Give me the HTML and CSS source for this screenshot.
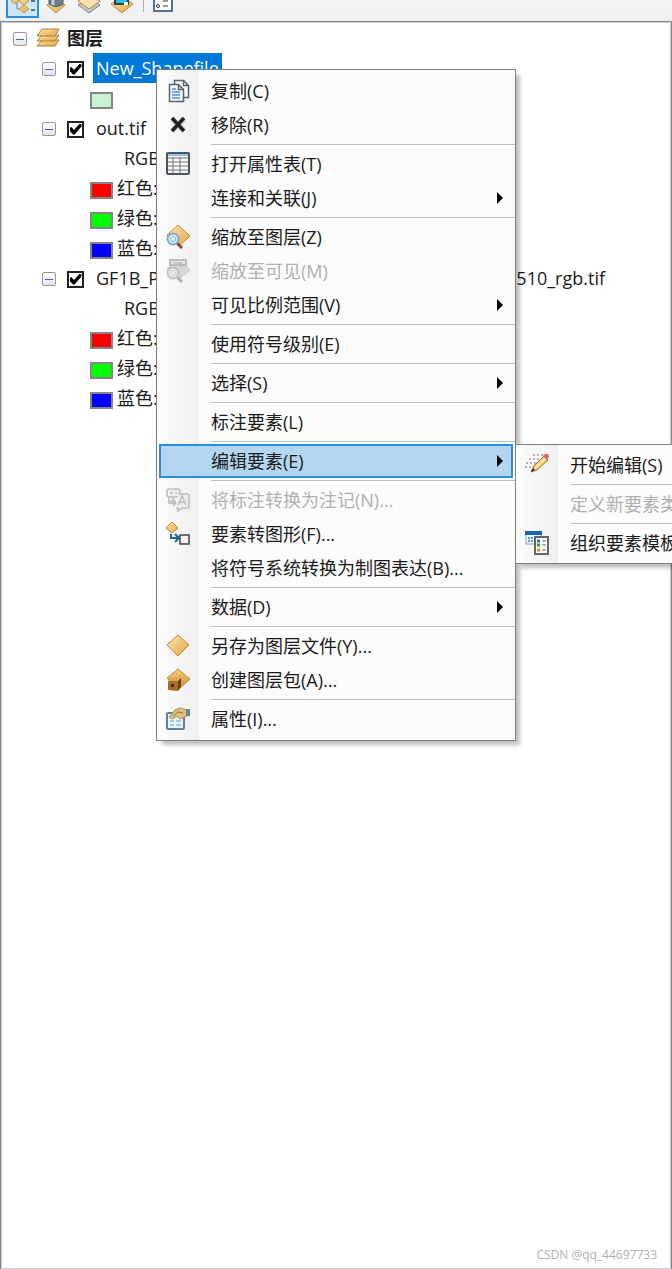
FILE: index.html
```
<!DOCTYPE html>
<html lang="zh-CN">
<head>
    <meta charset="UTF-8">
    <meta name="viewport" content="width=device-width, initial-scale=1.0">
    <title>图层</title>
    <link rel="stylesheet" href="styles.css">
</head>
<body>
    <!-- shared shapes -->
    <svg class="defs" width="0" height="0" aria-hidden="true">
        <defs>
            <linearGradient id="gold" x1="0" y1="0" x2="1" y2="1">
                <stop offset="0" stop-color="#fde7ae"/>
                <stop offset="1" stop-color="#e2a544"/>
            </linearGradient>
            <linearGradient id="amber" x1="0" y1="0" x2="0" y2="1">
                <stop offset="0" stop-color="#f9cf72"/>
                <stop offset="1" stop-color="#c98a2b"/>
            </linearGradient>
        </defs>
    </svg>

    <div class="toolbar">
        <button class="tool active" aria-label="按绘制顺序列出">
            <svg width="30" height="18" viewBox="0 0 30 18">
                <path d="M9 0v9h4M9 1h4" stroke="#7c8790" fill="none"/>
                <path d="M16-3l5 4-5 4-5-4zM16 5l5 4-5 4-5-4z" fill="url(#gold)" stroke="#c59a5a"/>
                <path d="M7-2l4 3-4 3-4-3z" fill="url(#gold)" stroke="#c59a5a"/>
                <path d="M23 1h4M23 10h4" stroke="#44789f" stroke-width="2"/>
            </svg>
        </button>
        <button class="tool" aria-label="按源列出">
            <svg width="24" height="18" viewBox="0 0 24 18">
                <path d="M3 5l9-5 9 5-9 8z" fill="url(#gold)" stroke="#b98a43"/>
                <path d="M5-2v6q7 5 14 0v-6z" fill="#6f7f92" stroke="#505c69"/>
                <path d="M9-2v7" stroke="#c5d3e1" stroke-width="3"/>
            </svg>
        </button>
        <button class="tool" aria-label="按可见性列出">
            <svg width="24" height="18" viewBox="0 0 24 18">
                <path d="M1 5l11-8 11 8-11 8z" fill="#c4c4c4" stroke="#858585"/>
                <path d="M1 1l11-8 11 8-11 8z" fill="#fbe3ad" stroke="#b98a43"/>
            </svg>
        </button>
        <button class="tool" aria-label="按选择列出">
            <svg width="24" height="18" viewBox="0 0 24 18">
                <path d="M1 4l11-8 11 8-11 9z" fill="url(#gold)" stroke="#b98a43"/>
                <path d="M5-2h13v6H5z" fill="#20c4e8" stroke="#3d3d3d" stroke-width="2"/>
                <path d="M14 2h4v3h-4z" fill="#fff"/>
            </svg>
        </button>
        <span class="divider"></span>
        <button class="tool" aria-label="选项">
            <svg width="20" height="18" viewBox="0 0 20 18">
                <path d="M1-4h18v15H1z" fill="#fff" stroke="#56718c" stroke-width="2"/>
                <circle cx="5" cy="6" r="1.500" fill="none" stroke="#333"/>
                <path d="M10 1h5M10 6h5" stroke="#333"/>
            </svg>
        </button>
    </div>

    <main class="contents">
        <div class="row root">
            <button class="expander" aria-label="折叠"></button>
            <svg class="layers" width="24" height="20" viewBox="0 0 24 20">
                <g fill="url(#gold)" stroke="#b47b34">
                    <path d="M6 12h17l-4 6H1z"/>
                    <path d="M6 7h17l-4 6H1z"/>
                    <path d="M6 1h17l-4 7H1z"/>
                </g>
            </svg>
            <strong>图层</strong>
        </div>

        <div class="row layer">
            <button class="expander" aria-label="折叠"></button>
            <input type="checkbox" id="layer-shape" checked>
            <label class="name selected" for="layer-shape">New_Shapefile</label>
        </div>
        <div class="row band"><span class="swatch mint"></span></div>

        <div class="row layer">
            <button class="expander" aria-label="折叠"></button>
            <input type="checkbox" id="layer-out" checked>
            <label class="name" for="layer-out">out.tif</label>
        </div>
        <div class="row composite">RGB</div>
        <div class="row band"><span class="swatch red"></span>红色:</div>
        <div class="row band"><span class="swatch green"></span>绿色:</div>
        <div class="row band"><span class="swatch blue"></span>蓝色:</div>

        <div class="row layer">
            <button class="expander" aria-label="折叠"></button>
            <input type="checkbox" id="layer-gf" checked>
            <label class="name long" for="layer-gf"><span>GF1B_P</span><span>510_rgb.tif</span></label>
        </div>
        <div class="row composite">RGB</div>
        <div class="row band"><span class="swatch red"></span>红色:</div>
        <div class="row band"><span class="swatch green"></span>绿色:</div>
        <div class="row band"><span class="swatch blue"></span>蓝色:</div>
    </main>

    <div class="menu context-menu" role="menu">
        <button class="item" role="menuitem">
            <svg class="icon" viewBox="0 0 24 24">
                <g fill="#f6f9fc" stroke="#59636d" stroke-width="1.500">
                    <path d="M8.500 1.500h9l5 5v12h-14z"/>
                    <path d="M17.500 1.500v5h5" fill="none"/>
                    <path d="M3.500 5.500h9l5 5v12h-14z"/>
                    <path d="M12.500 5.500v5h5" fill="none"/>
                </g>
                <path d="M6 10h4M6 13h8M6 16h8M6 19h8" stroke="#4a90cf" stroke-width="1.500"/>
            </svg>
            <span>复制(C)</span>
        </button>
        <button class="item" role="menuitem">
            <svg class="icon" viewBox="0 0 24 24">
                <path d="M6 6l12 12M18 6L6 18" stroke="#d8d8d8" stroke-width="6"/>
                <path d="M6 5l12 13M18 5L6 18" stroke="#202020" stroke-width="3.500"/>
            </svg>
            <span>移除(R)</span>
        </button>
        <hr>
        <button class="item" role="menuitem">
            <svg class="icon" viewBox="0 0 24 24">
                <rect x="1" y="1" width="22" height="21" rx="1" fill="#f7f7f7" stroke="#4c555d" stroke-width="2"/>
                <path d="M2 3h20" stroke="#8cc6ec" stroke-width="2"/>
                <path d="M2 6h20M2 10h20M2 14h20M2 18h20M7 5v16M14 5v16" stroke="#727272" fill="none"/>
            </svg>
            <span>打开属性表(T)</span>
        </button>
        <button class="item has-sub" role="menuitem"><span>连接和关联(J)</span></button>
        <hr>
        <button class="item" role="menuitem">
            <svg class="icon" viewBox="0 0 24 24">
                <path d="M1 10L12 0l12 11-11 10z" fill="url(#gold)" stroke="#c08a3d"/>
                <path d="M10 17l6 6" stroke="#8c4b2f" stroke-width="3"/>
                <circle cx="7" cy="14" r="5.500" fill="#d9efff" stroke="#86a9c9" stroke-width="2"/>
                <circle cx="7" cy="14" r="2.500" fill="#fff" stroke="#6bb2ed"/>
            </svg>
            <span>缩放至图层(Z)</span>
        </button>
        <button class="item" role="menuitem" disabled>
            <svg class="icon" viewBox="0 0 24 24">
                <path d="M1 10l5-4h13l5 5-11 9z" fill="#d6d6d6" stroke="#c4c4c4"/>
                <path d="M4 1h16v5H4z" fill="#e7e7e7" stroke="#bcbcbc" stroke-width="2"/>
                <path d="M7 4h10" stroke="#aaa"/>
                <path d="M10 17l6 6" stroke="#b0b0b0" stroke-width="3"/>
                <circle cx="7" cy="14" r="5.500" fill="#e9e9e9" stroke="#c2c2c2" stroke-width="2"/>
                <circle cx="7" cy="14" r="2.500" fill="#eee" stroke="#ccc"/>
            </svg>
            <span>缩放至可见(M)</span>
        </button>
        <button class="item has-sub" role="menuitem"><span>可见比例范围(V)</span></button>
        <hr>
        <button class="item" role="menuitem"><span>使用符号级别(E)</span></button>
        <hr>
        <button class="item has-sub" role="menuitem"><span>选择(S)</span></button>
        <hr>
        <button class="item" role="menuitem"><span>标注要素(L)</span></button>
        <hr>
        <button class="item has-sub open" role="menuitem"><span>编辑要素(E)</span></button>
        <hr>
        <button class="item" role="menuitem" disabled>
            <svg class="icon" viewBox="0 0 24 24" fill="none" stroke="#bcbcbc" stroke-width="1.500">
                <rect x="1" y="1" width="13" height="8" rx="2" fill="#eee"/>
                <path d="M4 5h3M9 5h2M3 9v6h7M7 12l3 3-3 3"/>
                <path d="M12 6h9q2 0 2 2v10q0 2-2 2h-5l-4 3v-3h-2" fill="#eee"/>
                <path d="M12 17l4-9 4 9M13 14h6M2 13h7M6 10l3 3-3 3"/>
            </svg>
            <span>将标注转换为注记(N)...</span>
        </button>
        <button class="item" role="menuitem">
            <svg class="icon" viewBox="0 0 24 24">
                <path d="M6 0l6 6-6 5-6-5z" fill="url(#gold)" stroke="#bd8330"/>
                <path d="M5 12v4h7M9 12l4 4-4 4" fill="none" stroke="#156a9e" stroke-width="2"/>
                <rect x="14" y="13" width="9" height="9" fill="#f1f1f1" stroke="#454545" stroke-width="1.500"/>
            </svg>
            <span>要素转图形(F)...</span>
        </button>
        <button class="item" role="menuitem"><span>将符号系统转换为制图表达(B)...</span></button>
        <hr>
        <button class="item has-sub" role="menuitem"><span>数据(D)</span></button>
        <hr>
        <button class="item" role="menuitem">
            <svg class="icon" viewBox="0 0 24 24">
                <path d="M1 11L12 1l11 10-11 11z" fill="url(#gold)" stroke="#b98743"/>
            </svg>
            <span>另存为图层文件(Y)...</span>
        </button>
        <button class="item" role="menuitem">
            <svg class="icon" viewBox="0 0 24 24">
                <path d="M1 10L12 1l12 10-11 10z" fill="url(#amber)" stroke="#c08a3d"/>
                <path d="M2 13l4-3h9l-3 3z" fill="#d9a652"/>
                <path d="M2 13h10v10l-10-1z" fill="#a46b22"/>
                <path d="M12 13l3-3v9l-3 4z" fill="#70420f"/>
                <path d="M5 16h3v3H5z" fill="#3f270d"/>
            </svg>
            <span>创建图层包(A)...</span>
        </button>
        <hr>
        <button class="item" role="menuitem">
            <svg class="icon" viewBox="0 0 24 24">
                <rect x="1" y="6" width="17" height="16" rx="1" fill="#e9f4fd" stroke="#60819d" stroke-width="2"/>
                <path d="M4 14h4M10 14h5M4 18h4M10 18h5" stroke="#a3c9e7" stroke-width="2"/>
                <path d="M3 10l6-7 5-2 7 2v6l-7 3-3-3-5 3z" fill="#dfc180" stroke="#a58d5c"/>
                <path d="M7 9l5-4 5 1" fill="none" stroke="#8d7443"/>
                <path d="M20 2h4v7h-4z" fill="#6d8798"/>
            </svg>
            <span>属性(I)...</span>
        </button>
    </div>

    <div class="menu sub-menu" role="menu">
        <button class="item" role="menuitem">
            <svg class="icon" viewBox="0 0 24 24">
                <path d="M1 10h13M4 6h13M8 2h12M0 14h10" stroke="#b5b5b5" stroke-width="2" stroke-dasharray="2 2"/>
                <path d="M6 19l3-6L19 3l4 4-11 10z" fill="#f3cf72" stroke="#987235"/>
                <path d="M10 15L21 5" stroke="#fff0b3" stroke-width="1.500"/>
                <path d="M18 3l2-2h3l1 3-2 3z" fill="#d9686a"/>
                <path d="M6 19l2-4 2 2z" fill="#333"/>
            </svg>
            <span>开始编辑(S)</span>
        </button>
        <hr>
        <button class="item" role="menuitem" disabled><span>定义新要素类型</span></button>
        <hr>
        <button class="item" role="menuitem">
            <svg class="icon" viewBox="0 0 24 24">
                <rect x="1" y="1" width="15" height="12" fill="#f3f9ff" stroke="#85a1b9"/>
                <path d="M0 2h17" stroke="#1566b8" stroke-width="4"/>
                <path d="M3 7h6M3 10h6" stroke="#579bd5" stroke-width="2" stroke-dasharray="2 1"/>
                <rect x="10" y="6" width="13" height="17" fill="#fff" stroke="#666" stroke-width="2"/>
                <path d="M12 10h3" stroke="#1778ca" stroke-width="3"/>
                <path d="M12 14h3" stroke="#2a972f" stroke-width="3"/>
                <path d="M12 19h3" stroke="#e28b16" stroke-width="3"/>
                <path d="M17 10h4M17 14h4M17 19h4" stroke="#666"/>
            </svg>
            <span>组织要素模板</span>
        </button>
    </div>

    <div class="watermark">CSDN @qq_44697733</div>
</body>
</html>
```

FILE: styles.css
```
* { margin: 0; padding: 0; box-sizing: border-box; }
body {
    font-family: "Open Sans", "Noto Sans CJK SC", sans-serif;
    font-size: 18px;
    line-height: 30px;
    color: #1a1a1a;
    background: #fff;
    min-height: 100vh;
    display: flex;
    flex-direction: column;
    position: relative;
    overflow: hidden;
}
button {
    font: inherit;
    color: inherit;
    border: none;
    background: none;
}
.defs { position: absolute; }

/* toolbar */
.toolbar {
    display: flex;
    align-items: flex-start;
    gap: 9px;
    height: 21px;
    padding-left: 6px;
    background: linear-gradient(#f5f5f5, #eee);
}
.tool { height: 18px; overflow: hidden; }
.tool svg { display: block; }
.tool.active {
    width: 33px;
    margin-right: -4px;
    background: #cfe6f8;
    border: 2px solid #2b8ddd;
    border-top: none;
}
.divider {
    width: 1px;
    height: 12px;
    background: #b0b0b0;
}

/* layer tree */
.contents {
    flex: 1;
    padding-top: 1px;
    border: 1px solid #858991;
    border-bottom: none;
    box-shadow: inset 0 0 0 1px #c8ccd1;
}
.row {
    display: flex;
    align-items: center;
    height: 30px;
    white-space: nowrap;
}
.root { padding-left: 12px; }
.root strong { margin-left: 7px; }
.layers { margin-left: 9px; }
.layer { padding-left: 41px; }
.composite { padding-left: 123px; }
.band { padding-left: 89px; }
.expander {
    width: 14px;
    height: 14px;
    margin-top: 2px;
    border: 1px solid #989898;
    border-radius: 2px;
    background: linear-gradient(#4a64b0, #4a64b0) center / 8px 1px no-repeat, linear-gradient(#fff, #e4e4e4);
}
input[type="checkbox"] {
    appearance: none;
    width: 17px;
    height: 17px;
    margin: 2px 0 0 11px;
    border: 2px solid #222;
    background: #fff;
    display: grid;
    place-items: center;
}
input[type="checkbox"]:checked::before {
    content: "";
    width: 12px;
    height: 11px;
    background: #000;
    clip-path: polygon(0 40%, 15% 32%, 38% 60%, 85% 0, 100% 8%, 100% 28%, 42% 100%, 30% 100%, 0 65%);
}
.name {
    margin-left: 9px;
    padding: 0 3px;
}
.name.selected {
    color: #fff;
    background: #0078d7;
}
.name.long {
    display: flex;
    justify-content: space-between;
    width: 515px;
}
.swatch {
    width: 23px;
    height: 17px;
    margin: 5px 4px 0 0;
    border: 2px solid #858585;
}
.mint { background: #c8f2d0; }
.red { background: #f00; }
.green { background: #0f0; }
.blue { background: #00f; }

/* popup menus */
.menu {
    position: absolute;
    display: flex;
    flex-direction: column;
    width: 360px;
    border: 1px solid #7d7d7d;
    background: linear-gradient(90deg, #fcfcfc, #efefef) 2px 0 / 40px 100% no-repeat, #fcfcfc;
    box-shadow: 5px 5px 4px -1px rgba(0, 0, 0, 0.25);
}
.context-menu {
    left: 156px;
    top: 69px;
    padding: 4px 0;
}
.sub-menu {
    left: 515px;
    top: 444px;
    padding: 3px 0;
}
.menu hr {
    height: 1px;
    margin: 2px 0 2px 54px;
    border: none;
    background: #bdbdbd;
}
.item {
    display: grid;
    grid-template-columns: 24px 1fr 8px;
    column-gap: 21px;
    align-items: center;
    height: 34px;
    margin: 0 2px;
    padding: 0 8px 0 7px;
    text-align: left;
    white-space: nowrap;
}
.item span { grid-column: 2; }
.item:disabled { color: #b0b0b0; }
.item.open {
    background: #b3d7f3;
    outline: 2px solid #2b8ddd;
    outline-offset: -2px;
}
.icon {
    width: 24px;
    height: 24px;
}
.has-sub::after {
    content: "";
    grid-column: 3;
    width: 6px;
    height: 12px;
    background: #000;
    clip-path: polygon(0 0, 100% 50%, 0 100%);
}

.watermark {
    position: absolute;
    right: 15px;
    bottom: 4px;
    font-size: 12px;
    line-height: 20px;
    color: #b0b0b0;
}
```
